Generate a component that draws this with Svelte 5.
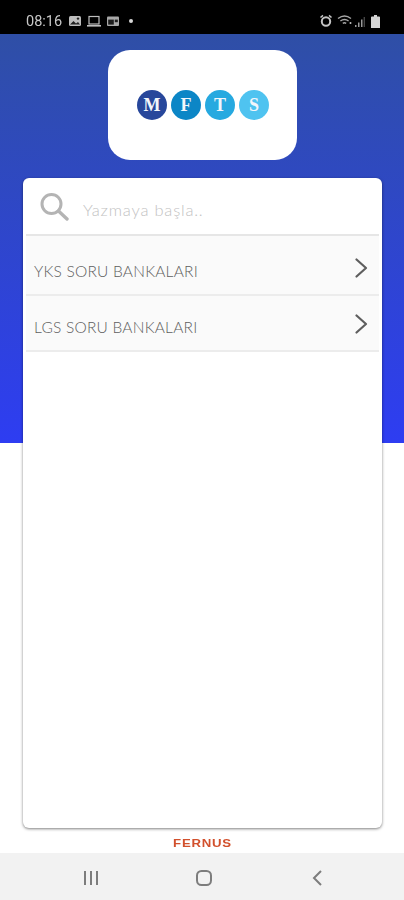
<script>
	const rows = ['YKS SORU BANKALARI', 'LGS SORU BANKALARI'];
	const circles = [
		{ letter: 'M', color: '#27479b' },
		{ letter: 'F', color: '#0c86c6' },
		{ letter: 'T', color: '#26a9e0' },
		{ letter: 'S', color: '#4fc3f0' }
	];
</script>

<div class="screen">
	<header class="status">
		<div class="status-side">
			<span class="time">08:16</span>
			<svg class="ico" viewBox="0 0 14 12" width="14" height="12">
				<rect x="1" y="1" width="12" height="10" rx="1.5" fill="#bdbdbd" />
				<path d="M2 9.5 5.5 6l2.5 2.5L10 7l2 2.5z" fill="#222" />
				<circle cx="10" cy="3.6" r="1.2" fill="#222" />
			</svg>
			<svg class="ico" viewBox="0 0 16 12" width="16" height="12" fill="none" stroke="#bdbdbd" stroke-width="1.2">
				<rect x="3" y="1.5" width="10" height="7.5" />
				<path d="M1 10.8h14" stroke-width="1.6" />
			</svg>
			<svg class="ico" viewBox="0 0 14 12" width="14" height="12">
				<rect x="1" y="1.5" width="12" height="9.5" rx="1" fill="#a8a8a8" />
				<rect x="2.2" y="4.6" width="5.6" height="5" fill="#1c1c1c" />
				<rect x="8.8" y="4.6" width="3" height="2.6" fill="#1c1c1c" />
			</svg>
			<span class="dot"></span>
		</div>
		<div class="status-side right">
			<svg class="ico alarm" viewBox="0 0 14 14" width="14" height="14" fill="none" stroke="#c4c4c4">
				<circle cx="7" cy="7.5" r="4.2" stroke-width="2" />
				<path d="M1.5 3.5 4 1.4M12.5 3.5 10 1.4" stroke-width="1.6" />
			</svg>
			<svg class="ico wifi" viewBox="0 0 16 12" width="16" height="12" fill="none" stroke="#a6a6a6" stroke-width="1.4">
				<path d="M1 3.5C5 .4 10 .4 14 3.5M3.4 6C6 4 9 4 11.6 6M5.8 8.4C7 7.6 8 7.6 9.2 8.4" />
				<circle cx="13.5" cy="8" r="1" fill="#c4c4c4" stroke="none" />
			</svg>
			<svg class="ico signal" viewBox="0 0 10 11" width="10" height="11">
				<path d="M0 11h1.5V9H0zM3 11h1.5V6.5H3zM6 11h1.5V3.5H6z" fill="#9a9a9a" />
				<path d="M8.6 11H10V1H8.6z" fill="#444" />
			</svg>
			<svg class="ico" viewBox="0 0 9 13" width="9" height="13">
				<path d="M3 0h3v1.4h2.2c.4 0 .8.4.8.8V13H0V2.2c0-.4.4-.8.8-.8H3z" fill="#d4d4d4" />
			</svg>
		</div>
	</header>

	<main class="main">
		<div class="logo-card">
			{#each circles as c}
				<span class="circle" style="background:{c.color}">{c.letter}</span>
			{/each}
		</div>

		<section class="card">
			<div class="search">
				<svg viewBox="0 0 30 30" width="30" height="30" fill="none" stroke="#b4b4b4">
					<circle cx="12.5" cy="12" r="9.5" stroke-width="3" />
					<path d="M19.5 19 28 27" stroke-width="3.4" stroke-linecap="round" />
				</svg>
				<span class="placeholder">Yazmaya başla..</span>
			</div>
			<div class="list">
				{#each rows as row}
					<div class="row">
						<span>{row}</span>
						<svg viewBox="0 0 14 20" width="14" height="20" fill="none" stroke="#5e5e5e" stroke-width="2.2" stroke-linecap="round" stroke-linejoin="round">
							<path d="M2.5 1.5 12 10l-9.5 8.5" />
						</svg>
					</div>
				{/each}
			</div>
		</section>

		<div class="brand">FERNUS</div>
	</main>

	<nav class="navbar">
		<svg viewBox="0 0 18 16" width="18" height="16" stroke="#7d7d7d" stroke-width="2">
			<path d="M3 1v14M9 1v14M15 1v14" />
		</svg>
		<svg class="home" viewBox="0 0 18 18" width="18" height="18" fill="none" stroke="#7d7d7d" stroke-width="2">
			<rect x="2" y="2" width="14" height="14" rx="4.5" />
		</svg>
		<svg viewBox="0 0 12 16" width="12" height="16" fill="none" stroke="#7d7d7d" stroke-width="2">
			<path d="M10 1 3 8l7 7" />
		</svg>
	</nav>
</div>

<style>
	:global(body) {
		margin: 0;
		background: #fff;
	}

	.screen {
		width: 404px;
		height: 900px;
		display: flex;
		flex-direction: column;
		font-family: 'Lato', 'Liberation Sans', sans-serif;
		overflow: hidden;
	}

	.status {
		height: 34px;
		background: #000;
		display: flex;
		justify-content: space-between;
		align-items: center;
		padding: 8px 24px 0 26px;
		box-sizing: border-box;
	}

	.status-side {
		display: flex;
		align-items: center;
		gap: 4px;
		filter: blur(0.4px);
	}

	.status-side.right {
		gap: 2px;
	}

	.time {
		color: #c8c8c8;
		font-size: 14.5px;
		font-family: 'Roboto', sans-serif;
		margin-right: 2px;
	}

	.dot {
		width: 4px;
		height: 4px;
		margin-left: 5px;
		border-radius: 50%;
		background: #d8d8d8;
	}

	.alarm {
		margin-right: 2px;
	}

	.signal {
		margin-right: 4px;
	}

	.main {
		flex: 1;
		display: flex;
		flex-direction: column;
		align-items: center;
		background: linear-gradient(#2f4fa6, #2e3df2) no-repeat;
		background-size: 100% 409px;
		padding-top: 16px;
		box-sizing: border-box;
	}

	.logo-card {
		width: 189px;
		height: 110px;
		background: #fff;
		border-radius: 22px;
		display: flex;
		justify-content: center;
		align-items: center;
		gap: 4px;
		padding-left: 2px;
		box-sizing: border-box;
	}

	.circle {
		width: 30px;
		height: 30px;
		border-radius: 50%;
		color: #f2f6fb;
		display: flex;
		align-items: center;
		justify-content: center;
		font-family: 'Liberation Serif', serif;
		font-size: 18px;
		font-weight: 700;
	}

	.card {
		width: 359px;
		height: 650px;
		margin-top: 18px;
		margin-left: 1px;
		background: #fff;
		border-radius: 6px;
		box-shadow: 0 1px 3px rgba(0, 0, 0, 0.5);
		box-sizing: border-box;
		padding: 0 3px;
	}

	.search {
		height: 58px;
		display: flex;
		align-items: center;
		gap: 14px;
		padding-left: 13px;
		border-bottom: 2px solid #e6e6e6;
		box-sizing: border-box;
	}

	.search svg {
		margin-top: 2px;
	}

	.placeholder {
		color: #c2c2c2;
		font-size: 16.5px;
		font-weight: 300;
		letter-spacing: 0.8px;
		margin-top: 8px;
	}

	.row {
		height: 56px;
		display: flex;
		justify-content: space-between;
		align-items: center;
		padding: 0 11px 0 8px;
		background: #fafafa;
		border-bottom: 2px solid #ececec;
		box-sizing: border-box;
		color: #5e5e5e;
		font-size: 15.5px;
		font-weight: 300;
		letter-spacing: 0.22px;
	}

	.row:first-child {
		height: 60px;
		padding-top: 4px;
	}

	.row span {
		margin-top: 8px;
	}

	.row svg {
		margin-top: 2px;
	}

	.brand {
		margin-top: 8px;
		color: #d2502c;
		font-family: 'Liberation Sans', sans-serif;
		font-size: 11px;
		font-weight: 700;
		letter-spacing: 0.6px;
		line-height: 14px;
		transform: scaleX(1.2);
	}

	.navbar {
		height: 47px;
		flex-shrink: 0;
		background: #f2f2f2;
		display: flex;
		align-items: center;
		justify-content: space-between;
		padding: 2px 81px 0 82px;
		box-sizing: border-box;
	}

	.home {
		margin-right: 3px;
	}

	.ico {
		display: block;
	}
</style>
